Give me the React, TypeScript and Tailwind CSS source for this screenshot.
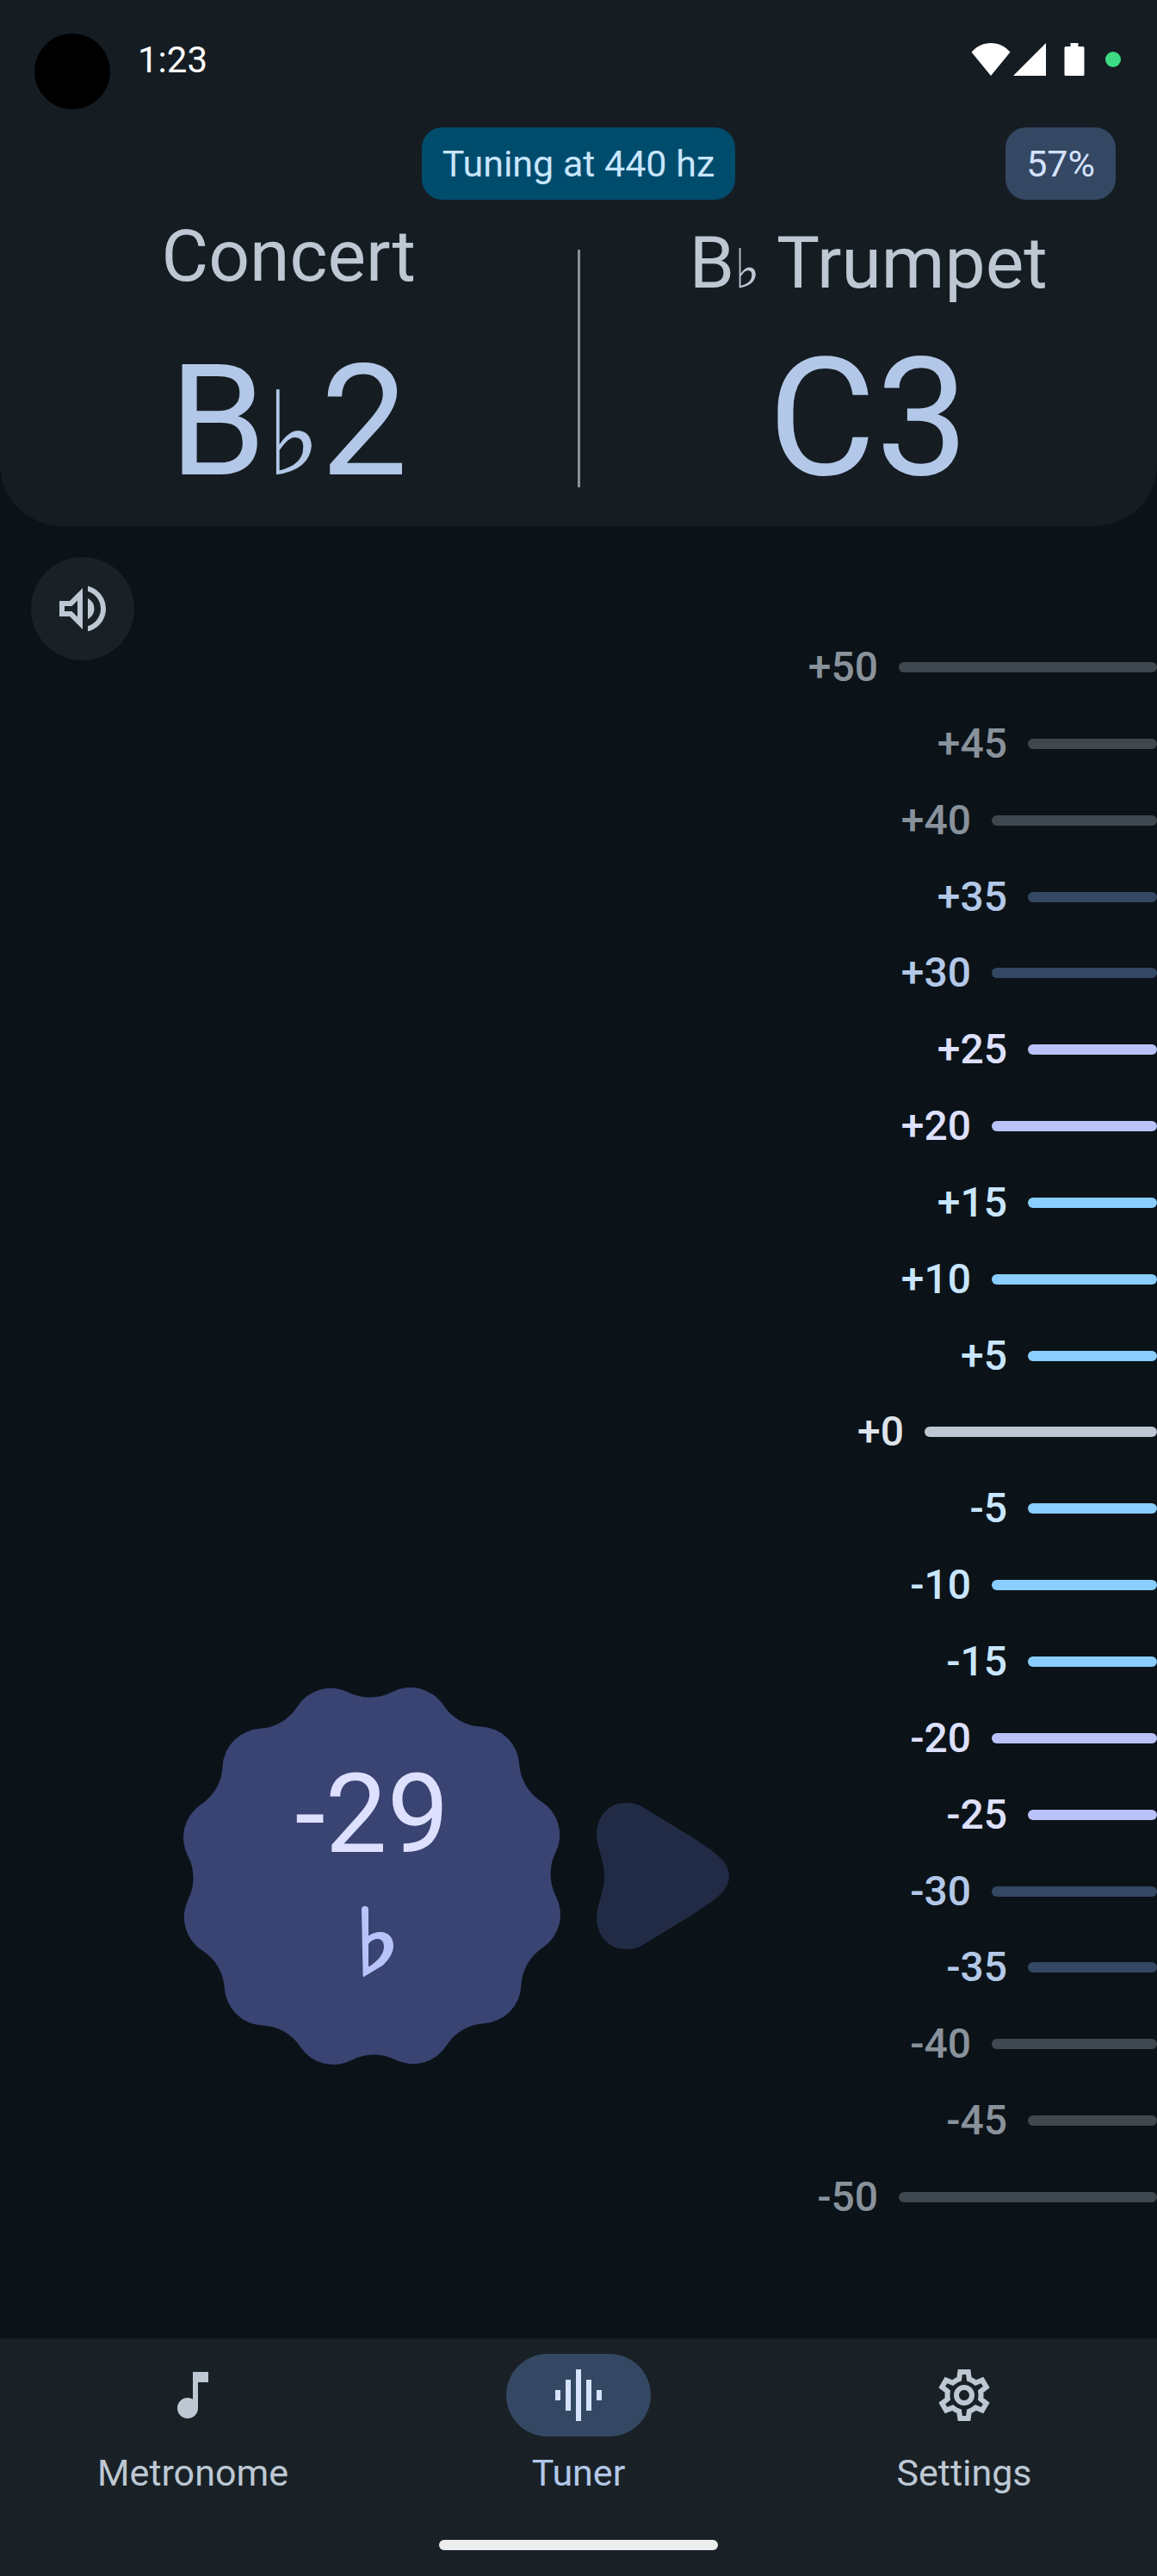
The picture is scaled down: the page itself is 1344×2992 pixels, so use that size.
import type { ReactNode } from "react";

type Tone = "muted" | "secondary" | "tertiary" | "primary" | "zero";

const TONES: Record<Tone, { label: string; bar: string }> = {
  muted: { label: "text-[#89929b]", bar: "bg-[#3f484f]" },
  secondary: { label: "text-[#b3c8e8]", bar: "bg-[#344863]" },
  tertiary: { label: "text-[#dee0ff]", bar: "bg-[#b9c3fa]" },
  primary: { label: "text-[#c8e6ff]", bar: "bg-[#89ceff]" },
  zero: { label: "text-[#dde3ea]", bar: "bg-[#bdc8d3]" },
};

function toneFor(cents: number): Tone {
  const distance = Math.abs(cents);
  if (distance === 0) return "zero";
  if (distance <= 15) return "primary";
  if (distance <= 25) return "tertiary";
  if (distance <= 35) return "secondary";
  return "muted";
}

function barWidthFor(cents: number): string {
  if (Math.abs(cents) === 50) return "w-[300px]";
  if (cents === 0) return "w-[270px]";
  return cents % 10 === 0 ? "w-[192px]" : "w-[150px]";
}

const TICKS = Array.from({ length: 21 }, (_, i) => 50 - i * 5);

/** Outline of a twelve-lobed cookie made of tangent arcs around the origin. */
function cookiePath(): string {
  const lobes = 12;
  const lobeCenter = 178.5;
  const lobeRadius = 46.2;
  const valleyCenter = 263.3;
  const valleyRadius = 55.8;
  const step = (Math.PI * 2) / lobes;
  const ratio = lobeRadius / (lobeRadius + valleyRadius);
  const joint = (lobeAngle: number, valleyAngle: number) => {
    const lx = lobeCenter * Math.sin(lobeAngle);
    const ly = -lobeCenter * Math.cos(lobeAngle);
    const vx = valleyCenter * Math.sin(valleyAngle);
    const vy = -valleyCenter * Math.cos(valleyAngle);
    return `${(lx + (vx - lx) * ratio).toFixed(2)} ${(ly + (vy - ly) * ratio).toFixed(2)}`;
  };
  let d = "";
  for (let i = 0; i < lobes; i++) {
    const lobe = step / 2 + i * step;
    const before = lobe - step / 2;
    const after = lobe + step / 2;
    if (i === 0) d += `M${joint(lobe, before)}`;
    d += `A${lobeRadius} ${lobeRadius} 0 0 1 ${joint(lobe, after)}`;
    d += `A${valleyRadius} ${valleyRadius} 0 0 0 ${joint(lobe + step, after)}`;
  }
  return d + "Z";
}

const COOKIE = cookiePath();

function Icon({ children }: { children: ReactNode }) {
  return (
    <svg viewBox="0 0 24 24" className="size-[72px]" fill="currentColor" aria-hidden="true">
      {children}
    </svg>
  );
}

function StatusBar() {
  return (
    <div className="flex h-[148px] items-start pt-[39px] pr-[42px] pl-10">
      <div className="size-[88px] rounded-full bg-black" />
      <time className="ml-8 text-[42px] leading-[62px] text-white">1:23</time>
      <div className="ml-auto flex h-[60px] items-center text-white">
        <svg viewBox="0 0 46 38" className="h-[38px] w-[46px]" fill="currentColor" aria-label="Wi-Fi">
          <path d="M23 38 0.5 10.5C6.500 4 14 0 23 0s16.500 4 22.500 10.500z" />
        </svg>
        <svg viewBox="0 0 38 38" className="ml-[3px] h-[38px] w-[38px]" fill="currentColor" aria-label="Signal">
          <path d="M38 0v38H0z" />
        </svg>
        <svg viewBox="0 0 24 38" className="ml-[21px] h-[38px] w-[24px]" fill="currentColor" aria-label="Battery">
          <path d="M7.500 0h9v4H22q1.500 0 1.500 1.500v31q0 1.500-1.500 1.500H2Q0.500 38 0.500 36.500v-31Q0.500 4 2 4h5.500z" />
        </svg>
        <div className="ml-6 size-[18px] rounded-full bg-[#3ddc84]" />
      </div>
    </div>
  );
}

function Flat() {
  return <span className="font-['DejaVu_Sans'] text-[75%] leading-none">♭</span>;
}

function Header() {
  return (
    <header className="rounded-b-[72px] bg-[#151d23]">
      <StatusBar />
      <div className="grid grid-cols-[1fr_auto_1fr] px-12 text-[43px] leading-[60px]">
        <button type="button" className="col-start-2 rounded-3xl bg-[#004c6d] px-6 py-3 text-[#c8e6ff]">
          Tuning at 440 hz
        </button>
        <button type="button" className="justify-self-end rounded-3xl bg-[#344863] px-6 py-3 text-[#d5e3ff]">
          57%
        </button>
      </div>
      <div className="flex pb-[21px] text-center text-[#bdc8d3]">
        <section className="flex flex-1 flex-col gap-[42px] pt-4">
          <h2 className="text-[84px] leading-[100px]">Concert</h2>
          <p className="text-[180px] leading-[200px] text-[#b3c8e8]">
            B<Flat />2
          </p>
        </section>
        <div className="mt-[58px] mb-6 w-[3px] bg-[#89929b]" />
        <section className="flex flex-1 flex-col gap-[30px] pt-6">
          <h2 className="text-[84px] leading-[100px]">
            B<Flat /> Trumpet
          </h2>
          <p className="text-[192px] leading-[200px] text-[#b3c8e8]">C3</p>
        </section>
      </div>
    </header>
  );
}

function Pointer({ cents }: { cents: number }) {
  return (
    <div className="flex flex-1 flex-col py-[134px]">
      <div style={{ flexGrow: 50 - cents }} />
      <div className="flex h-[60px] items-center">
        <div className="grid shrink-0 place-items-center">
          <svg viewBox="-240 -240 480 480" className="col-start-1 row-start-1 size-[480px] text-[#3a4472]" aria-hidden="true">
            <path d={COOKIE} fill="currentColor" transform="rotate(-0.5)" />
          </svg>
          <div className="z-10 col-start-1 row-start-1 flex flex-col items-center">
            <output className="text-[128px] leading-[144px] text-[#dee0ff]">{cents}</output>
            <svg viewBox="-72 -72 144 144" className="size-36 text-[#b9c3fa]" role="img" aria-label="flat">
              <path
                transform="translate(-12 -37)"
                fill="currentColor"
                fillRule="evenodd"
                d="M0 4a4 4 0 0 1 8 0V34.500C12 31.500 17 30 22 30c9 0 15 6.500 15 16 0 8-5 15.500-12 22.500L3.500 81.500Q1.700 83 1.600 81zM8 45v23.500q0 2.500 2 1C19 63 26 56 26 47c0-5.500-2.500-9-7-9-4 0-7.500 2-10 4.500Q8 43.500 8 45z"
              />
            </svg>
          </div>
        </div>
        <svg viewBox="0 0 154 170" className="ml-[21px] h-[170px] w-[154px] shrink-0 text-[#222b45]" aria-hidden="true">
          <path
            fill="currentColor"
            d="M34 0C43 0 50 2 57 7L111 40C136 56 154 68 154 85S136 114 111 130L57 163C50 168 43 170 34 170 14 170 0 154 0 133 0 119 9 103 9 85S0 51 0 37C0 16 14 0 34 0z"
          />
        </svg>
      </div>
      <div style={{ flexGrow: 50 + cents }} />
    </div>
  );
}

function Scale() {
  return (
    <ol className="flex flex-col items-end justify-between py-[134px]">
      {TICKS.map((cents) => {
        const tone = TONES[toneFor(cents)];
        return (
          <li key={cents} className="flex h-[60px] items-center gap-6">
            <span className={`text-[48px] leading-[60px] font-medium ${tone.label}`}>
              {cents >= 0 ? `+${cents}` : cents}
            </span>
            <div className={`h-3 rounded-full ${barWidthFor(cents)} ${tone.bar}`} />
          </li>
        );
      })}
    </ol>
  );
}

function NavItem({ label, active = false, children }: { label: string; active?: boolean; children: ReactNode }) {
  return (
    <a
      href="#"
      aria-current={active ? "page" : undefined}
      className={`flex flex-1 flex-col items-center gap-3 ${active ? "text-[#b3c8e8]" : "text-[#bdc8d3]"}`}
    >
      <span
        className={`flex h-24 w-[168px] items-center justify-center rounded-full ${active ? "bg-[#344863] text-[#d5e3ff]" : ""}`}
      >
        <Icon>{children}</Icon>
      </span>
      <span className="text-[43px] leading-[60px]">{label}</span>
    </a>
  );
}

function BottomNav() {
  return (
    <footer className="bg-[#192127] pt-[18px] pb-[30px]">
      <nav className="flex">
        <NavItem label="Metronome">
          <path d="M12 3v10.550c-.59-.34-1.270-.55-2-.55-2.210 0-4 1.790-4 4s1.790 4 4 4 4-1.790 4-4V7h4V3h-6z" />
        </NavItem>
        <NavItem label="Tuner" active>
          <path d="M7 18h2V6H7v12zm4 4h2V2h-2v20zm-8-8h2v-4H3v4zm12 4h2V6h-2v12zm4-8v4h2v-4h-2z" />
        </NavItem>
        <NavItem label="Settings">
          <path
            fillRule="evenodd"
            d="M19.43 13.01c.04-.33.08-.67.08-1.010 0-.34-.03-.66-.06-.97l2.440-1.920-2.430-4.220-2.870 1.170c-.52-.4-1.090-.74-1.700-1L14.440 2H9.570l-.44 3.070c-.61.26-1.180.6-1.700 1L4.560 4.890 2.120 9.110l2.440 1.920c-.04.33-.06.65-.06.97 0 .34.03.68.07 1.010L2.130 14.910l2.430 4.200 2.880-1.150c.52.4 1.080.73 1.700.99L9.580 22h4.850l.44-3.070c.62-.26 1.180-.59 1.710-.99l2.860 1.170 2.430-4.200zM17.450 11.270c.04.31.05.52.05.73 0 .21-.02.43-.05.73l-.14 1.130.89.7 1.080.84-.7 1.210-1.270-.51-1.040-.42-.9.68c-.43.32-.84.56-1.250.73l-1.060.43-.16 1.130-.2 1.350h-1.400l-.19-1.350-.16-1.130-1.060-.43c-.43-.18-.83-.41-1.230-.71l-.91-.7-1.060.43-1.270.51-.7-1.210 1.080-.84.89-.7-.14-1.130c-.03-.31-.05-.54-.05-.74s.02-.43.05-.73l.14-1.130-.89-.7-1.080-.84.7-1.210 1.270.51 1.040.42.9-.68c.43-.32.84-.56 1.250-.73l1.060-.43.16-1.130.2-1.350h1.390l.19 1.350.16 1.130 1.060.43c.43.18.83.41 1.230.71l.91.7 1.060-.43 1.270-.51.7 1.210-1.070.85-.89.7.14 1.130zM12 8c-2.210 0-4 1.790-4 4s1.790 4 4 4 4-1.790 4-4-1.790-4-4-4zm0 6c-1.100 0-2-.9-2-2s.9-2 2-2 2 .9 2 2-.9 2-2 2z"
          />
        </NavItem>
      </nav>
      <div className="mx-auto mt-12 h-3 w-[324px] rounded-full bg-[#eceeee]" />
    </footer>
  );
}

export default function App() {
  return (
    <div className="flex min-h-screen flex-col bg-[#0b1319] font-['Roboto',sans-serif]">
      <Header />
      <main className="flex flex-1">
        <div className="p-9">
          <button
            type="button"
            aria-label="Play reference tone"
            className="flex size-[120px] items-center justify-center rounded-full bg-[#192127] text-[#bdc8d3]"
          >
            <Icon>
              <path d="M3 9v6h4l5 5V4L7 9H3zm7-.17v6.340L7.830 13H5v-2h2.830L10 8.830zM16.500 12A4.500 4.500 0 0 0 14 7.970v8.050c1.480-.73 2.500-2.250 2.500-4.020zM14 3.230v2.060c2.890.86 5 3.540 5 6.710s-2.110 5.850-5 6.710v2.060c4.010-.91 7-4.490 7-8.770 0-4.280-2.990-7.860-7-8.770z" />
            </Icon>
          </button>
        </div>
        <Pointer cents={-29} />
        <Scale />
      </main>
      <BottomNav />
    </div>
  );
}
